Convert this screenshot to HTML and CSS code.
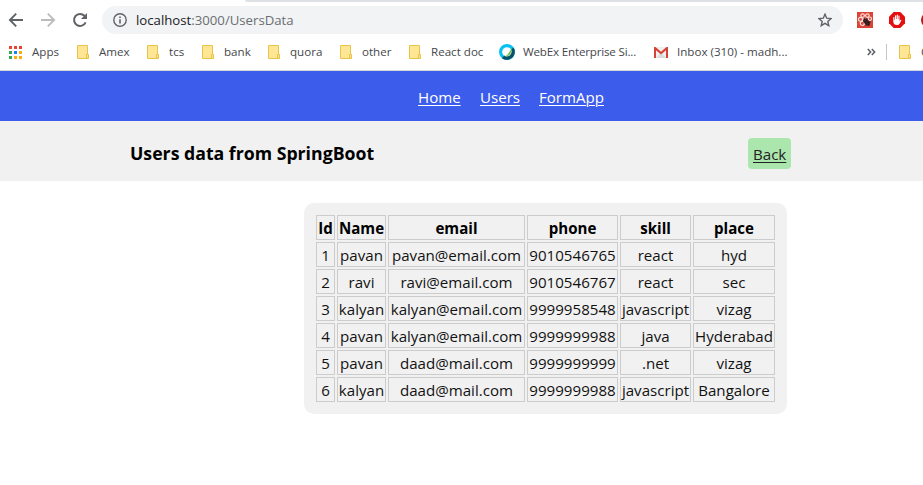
FILE: index.html
```html
<!DOCTYPE html>
<html lang="en">
<head>
<meta charset="utf-8">
<title>Users data</title>
<link rel="stylesheet" href="styles.css">
</head>
<body>
<svg class="defs" width="0" height="0">
  <symbol id="folder" viewBox="0 0 12 14"><path d="M.5.5h10v9.3h1v3.7H.5z" fill="#ffe694" stroke="#e8c54a"/><path d="M9.5 13V9.5h2V13z" fill="#ffe694" stroke="#e8c54a"/></symbol>
</svg>
<div class="browser">
  <div class="tab-strip"></div>
  <div class="toolbar">
    <svg class="nav-icon" viewBox="0 0 16 16"><path d="M15 8H2M8.2 1.7 1.9 8l6.3 6.3" fill="none" stroke="#5f6368" stroke-width="1.9"/></svg>
    <svg class="nav-icon" viewBox="0 0 16 16"><path d="M1 8h13M7.8 1.7 14.1 8l-6.3 6.3" fill="none" stroke="#babcbe" stroke-width="1.9"/></svg>
    <svg class="nav-icon" viewBox="0 0 16 16"><path d="M13.6 10.3A6 6 0 1 1 12.4 3.8L14 5.4" fill="none" stroke="#5f6368" stroke-width="2"/><path d="M15 1v6H9z" fill="#5f6368"/></svg>
    <div class="omnibox">
      <svg class="info" viewBox="0 0 14 14"><circle cx="7" cy="7" r="6.2" fill="none" stroke="#5f6368" stroke-width="1.4"/><path d="M6.2 6.2h1.6v4.3H6.2zM6.2 3.5h1.6V5H6.2z" fill="#5f6368"/></svg>
      <span class="url">localhost<span class="path">:3000/UsersData</span></span>
      <svg class="star" viewBox="0 0 14 14"><path d="M7 1.2l1.7 4 4.3.4-3.2 2.8 1 4.3L7 10.4l-3.8 2.3 1-4.3L1 5.6l4.3-.4z" fill="none" stroke="#5f6368" stroke-width="1.4"/></svg>
    </div>
    <svg class="ext bug" viewBox="0 0 16 16"><path d="M0 0h16v16H0z" fill="#db4437"/><g fill="none" stroke="#f9dcd8" stroke-width="1.2"><circle cx="5.6" cy="3.6" r="1.8"/><circle cx="10.4" cy="3.6" r="1.8"/><circle cx="3.5" cy="7.4" r="2"/><circle cx="12.8" cy="6.7" r="1.7"/><circle cx="5.3" cy="11.5" r="2"/><path d="M5 7h4"/></g><path d="M7 6l3 1 3 3v3l-2 1-3-2-2-3z" fill="#3a2020"/><path d="M6 10h8M9 14l1-8M12 14l-2-4" stroke="#3a2020" stroke-width=".8"/></svg>
    <svg class="ext" viewBox="0 0 16 16"><path d="M4.7 0h6.6L16 4.7v6.6L11.3 16H4.7L0 11.3V4.7z" fill="#e60f10"/><path d="M4.3 5.3q.7-.7 1.2.2V8h.5V3.7q.6-.9 1.2 0V7h.5V3q.6-.9 1.2 0v4h.5V4q.6-.9 1.1 0v5l1.1-1.3q1-.3.8.6l-1.8 3.5q-.6 1.3-2.6 1.3-3.6 0-3.7-3.5z" fill="#fff"/></svg>
    <svg class="ext" viewBox="0 0 16 16"><circle cx="8" cy="8" r="8" fill="#c9151b"/></svg>
  </div>
  <div class="bookmarks">
    <div class="mark apps"><svg width="13" height="13" viewBox="0 0 13 13"><path d="M0 0h3v3H0zM5 0h3v3H5zM10 0h3v3h-3z" fill="#ea4335"/><path d="M0 5h3v3H0zM0 10h3v3H0z" fill="#34a853"/><path d="M5 5h3v3H5z" fill="#1a83f4"/><path d="M10 5h3v3h-3zM5 10h3v3H5zM10 10h3v3h-3z" fill="#fbae0b"/></svg><span>Apps</span></div>
    <div class="mark amex"><svg class="folder"><use href="#folder"/></svg><span>Amex</span></div>
    <div class="mark tcs"><svg class="folder"><use href="#folder"/></svg><span>tcs</span></div>
    <div class="mark bank"><svg class="folder"><use href="#folder"/></svg><span>bank</span></div>
    <div class="mark quora"><svg class="folder"><use href="#folder"/></svg><span>quora</span></div>
    <div class="mark other"><svg class="folder"><use href="#folder"/></svg><span>other</span></div>
    <div class="mark react"><svg class="folder"><use href="#folder"/></svg><span>React doc</span></div>
    <div class="mark webex"><svg width="16" height="16" viewBox="0 0 16 16"><circle cx="8" cy="8" r="6.4" fill="#fff" stroke="#07c1f2" stroke-width="3.2"/><path d="M14.6 3.6A8 8 0 0 1 3 14.2l2.2-2.6a4.8 4.8 0 0 0 7-6z" fill="#085168"/><path d="M12.2 4.4c1.2 4-1.6 8.4-6.8 8.5 3.3-2 5.2-4.8 6.8-8.5z" fill="#6cc04a"/></svg><span>WebEx Enterprise Si...</span></div>
    <div class="mark gmail"><svg width="14" height="11" viewBox="0 0 14 11"><path d="M1 0h12v11H1z" fill="#f0efef"/><path d="M2 11 7 6l5 5z" fill="#dcdcdc"/><path d="M0 0h1.5L7 4.8 12.5 0H14v11h-2V3.2L7 7.5 2 3.2V11H0z" fill="#d54336"/></svg><span>Inbox (310) - madh...</span></div>
    <svg class="more" width="9" height="8" viewBox="0 0 9 8"><path d="M.8 1l2.8 3L.8 7M4.8 1l2.8 3-2.8 3" fill="none" stroke="#5f6368" stroke-width="1.6"/></svg>
    <div class="divider"></div>
    <div class="mark last"><svg class="folder"><use href="#folder"/></svg><span>Other bookmarks</span></div>
  </div>
</div>
<nav class="nav"><a class="home">Home</a><a class="users">Users</a><a class="form">FormApp</a></nav>
<header class="head"><h1>Users data from SpringBoot</h1><a class="back">Back</a></header>
<main class="panel">
  <table>
    <colgroup><col class="c-id"><col class="c-name"><col class="c-email"><col class="c-phone"><col class="c-skill"><col class="c-place"></colgroup>
    <tr><th>Id</th><th>Name</th><th>email</th><th>phone</th><th>skill</th><th>place</th></tr>
    <tr><td>1</td><td>pavan</td><td>pavan@email.com</td><td>9010546765</td><td>react</td><td>hyd</td></tr>
    <tr><td>2</td><td>ravi</td><td>ravi@email.com</td><td>9010546767</td><td>react</td><td>sec</td></tr>
    <tr><td>3</td><td>kalyan</td><td>kalyan@email.com</td><td>9999958548</td><td>javascript</td><td>vizag</td></tr>
    <tr><td>4</td><td>pavan</td><td>kalyan@email.com</td><td>9999999988</td><td>java</td><td>Hyderabad</td></tr>
    <tr><td>5</td><td>pavan</td><td>daad@mail.com</td><td>9999999999</td><td>.net</td><td>vizag</td></tr>
    <tr><td>6</td><td>kalyan</td><td>daad@mail.com</td><td>9999999988</td><td>javascript</td><td>Bangalore</td></tr>
  </table>
</main>
</body>
</html>
```
FILE: styles.css
```css
* { box-sizing: border-box; }
body { margin: 0; height: 485px; overflow: hidden; background: #fff; color: #111; font: 15.1px/21px "Open Sans", "Noto Sans", sans-serif; }
svg { display: block; flex: none; }
.defs { display: none; }
.browser { height: 71px; border-bottom: 1px solid #d5d7da; overflow: hidden; }
.tab-strip { height: 2px; margin-left: 245px; background: #dee1e6; border-bottom-left-radius: 2px; }
.toolbar { display: flex; align-items: center; height: 36px; padding-left: 8px; white-space: nowrap; }
.nav-icon { width: 16px; height: 16px; margin-right: 16px; }
.nav-icon:nth-child(3) { margin-right: 14px; }
.omnibox { flex: none; display: flex; align-items: center; width: 741px; height: 28px; padding: 0 11px; border-radius: 14px; background: #f1f3f4; }
.info { width: 14px; height: 14px; margin-right: 9px; }
.url { flex: 1; font-size: 13.2px; color: #202124; }
.path { color: #6b6e72; }
.star { width: 14px; height: 14px; }
.ext { width: 16px; height: 16px; margin-left: 16px; }
.bug { margin-left: 14px; }
.bookmarks { display: flex; align-items: center; height: 28px; padding-left: 9px; font-size: 11.6px; line-height: 16px; color: #45484c; white-space: nowrap; }
.mark { flex: none; display: flex; align-items: center; gap: 10px; }
.folder { width: 12px; height: 14px; }
.apps { width: 68px; }
.amex { width: 70px; }
.tcs { width: 55px; }
.bank { width: 66px; }
.quora { width: 72px; }
.other { width: 69px; }
.react { width: 90px; }
.webex { width: 155px; gap: 8px; letter-spacing: -0.18px; }
.gmail { width: 213px; gap: 9px; }
.more { margin-right: 10px; }
.divider { flex: none; width: 1px; height: 16px; margin-right: 12px; background: #c4c6c9; }
.nav { display: flex; align-items: center; height: 50px; padding: 3px 0 0 418px; background: #3c5ceb; color: #fff; }
.nav a, .back { text-decoration: underline; text-underline-offset: 2px; text-decoration-thickness: 1px; }
.home { width: 62px; }
.users { width: 59px; }
.head { display: flex; align-items: center; justify-content: space-between; height: 60px; padding: 5px 132px 0 130px; background: #f1f1f1; }
h1 { margin: 0; font-size: 17.7px; font-weight: 700; color: #000; white-space: nowrap; }
.back { width: 43px; height: 31px; padding: 6px 5px 4px; border-radius: 4px; background: #abe6ad; color: #222; white-space: nowrap; }
.panel { width: 483px; margin: 22px 0 0 304px; padding: 10px; border-radius: 10px; background: #f1f1f1; }
table { table-layout: fixed; width: 463px; border-collapse: separate; border-spacing: 2px; }
.c-id { width: 19px; }
.c-name { width: 49px; }
.c-email { width: 137px; }
.c-phone { width: 91px; }
.c-skill { width: 71px; }
.c-place { width: 82px; }
th, td { height: 25px; padding: 2px 0 0; border: 1px solid #ccc; text-align: center; white-space: nowrap; line-height: 21px; }
th { color: #000; }
```
